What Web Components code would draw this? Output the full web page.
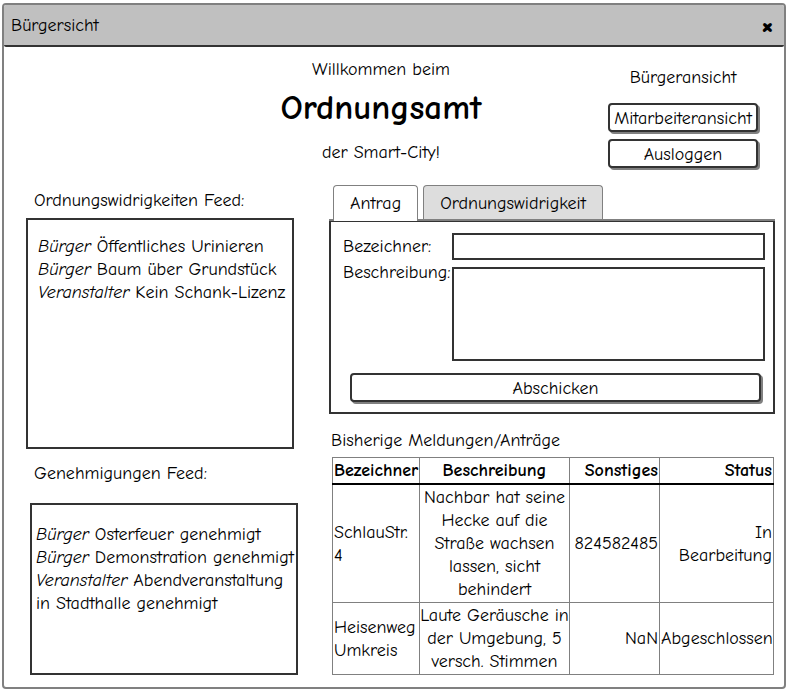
<!DOCTYPE html>
<html lang="de">
<head>
<meta charset="utf-8">
<title>Bürgersicht</title>
<style>
  body {
    margin: 3px 3px 3px 2px;
    color: #000;
    background: #fff;
    font: 18px/23px "Comic Neue", "Comic Sans MS", "Open Sans", sans-serif;
  }
</style>
</head>
<body>
<app-window heading="Bürgersicht">
  <welcome-header slot="header"></welcome-header>
  <feed-box slot="left" heading="Ordnungswidrigkeiten Feed:" class="reports">
    <div><i>Bürger</i> Öffentliches Urinieren</div>
    <div><i>Bürger</i> Baum über Grundstück</div>
    <div><i>Veranstalter</i> Kein Schank-Lizenz</div>
  </feed-box>
  <feed-box slot="left" heading="Genehmigungen Feed:" class="permits">
    <div><i>Bürger</i> Osterfeuer genehmigt</div>
    <div><i>Bürger</i> Demonstration genehmigt</div>
    <div><i>Veranstalter</i> Abendveranstaltung in Stadthalle genehmigt</div>
  </feed-box>
  <report-form slot="right"></report-form>
  <report-table slot="right"></report-table>
</app-window>

<script>
const define = (name, html, setup) => {
  const template = document.createElement('template');
  template.innerHTML = html;
  customElements.define(name, class extends HTMLElement {
    constructor() {
      super();
      this.attachShadow({ mode: 'open' }).append(template.content.cloneNode(true));
    }
    connectedCallback() {
      if (setup) setup(this, this.shadowRoot);
    }
  });
};

define('app-window', `
  <style>
    :host { display: block; border: 2px solid #808080; border-radius: 4px; }
    .bar {
      display: flex; align-items: center; justify-content: space-between;
      height: 40px; padding: 0 10px 0 7px;
      background: #c0c0c0; border-bottom: 2px solid #333; border-radius: 2px;
    }
    .bar button { padding: 0; border: 0; background: none; color: inherit; font: inherit; font-size: 34px; font-weight: bold; line-height: 23px; }
    .columns {
      display: grid; grid-template-columns: 272fr 446fr; gap: 31px;
      padding: 17px 9px 12px 22px; align-items: start;
    }
    .left, .right { display: flex; flex-direction: column; min-width: 0; }
    .left { padding-top: 4px; gap: 13px; }
    .right { gap: 15px; }
  </style>
  <div class="bar">
    <span class="title"></span>
    <button type="button" aria-label="Schließen">×</button>
  </div>
  <slot name="header"></slot>
  <div class="columns">
    <div class="left"><slot name="left"></slot></div>
    <div class="right"><slot name="right"></slot></div>
  </div>
`, (el, root) => {
  root.querySelector('.title').textContent = el.getAttribute('heading');
});

define('sketch-button', `
  <style>
    :host { display: block; }
    button {
      display: block; width: 100%; box-sizing: border-box; padding: 2px 0 0; font: inherit; color: inherit;
      background: #fff; border: 2px solid #333; border-radius: 4px;
      box-shadow: 2px 2px 0 #808080; white-space: nowrap;
    }
  </style>
  <button type="button"><slot></slot></button>
`);

define('welcome-header', `
  <style>
    :host {
      display: grid; grid-template-columns: 150px 1fr 150px;
      padding: 11px 26px 0 0; align-items: start;
    }
    .center { grid-column: 2; text-align: center; }
    p, h1 { margin: 0; }
    h1 { font-size: 35px; line-height: 40px; margin: 7px 0 13px; }
    .side { display: grid; gap: 7px; padding-top: 8px; text-align: center; }
    .side p { padding-bottom: 7px; }
  </style>
  <div class="center">
    <p>Willkommen beim</p>
    <h1>Ordnungsamt</h1>
    <p>der Smart-City!</p>
  </div>
  <div class="side">
    <p>Bürgeransicht</p>
    <sketch-button>Mitarbeiteransicht</sketch-button>
    <sketch-button>Ausloggen</sketch-button>
  </div>
`);

define('feed-box', `
  <style>
    :host { display: block; }
    h2 { margin: 0 0 6px 8px; font: inherit; }
    .box { box-sizing: border-box; min-height: 231px; margin-right: 4px; padding: 15px 0 15px 10px; border: 2px solid #333; }
    :host(.permits) .box { min-height: 172px; margin: 0 0 0 4px; padding: 18px 0 15px 4px; }
    :host(.permits) h2 { margin-bottom: 18px; }
  </style>
  <h2></h2>
  <div class="box"><slot></slot></div>
`, (el, root) => {
  root.querySelector('h2').textContent = el.getAttribute('heading');
});

define('report-form', `
  <style>
    :host { display: block; }
    .tabs { display: flex; align-items: end; gap: 5px; padding-left: 4px; border-bottom: 2px solid #808080; }
    .tabs button {
      font: inherit; color: inherit; padding: 6px 16px 4px; background: #ddd;
      border: 1px solid #808080; border-bottom: 0; border-radius: 4px 4px 0 0;
    }
    .tabs button[aria-selected="true"] { background: #fff; margin-bottom: -2px; padding-bottom: 6px; }
    form {
      display: grid; grid-template-columns: auto 1fr; column-gap: 2px; row-gap: 7px;
      padding: 11px 8px 9px 12px; border: 2px solid #333; border-top-width: 1px;
    }
    label { padding-top: 2px; }
    label[for="text"] { padding-top: 0; margin-top: -6px; }
    input, textarea {
      box-sizing: border-box; width: 100%; display: block; margin: 0; padding: 2px 4px; font: inherit;
      border: 2px solid #333; border-radius: 0; background: #fff; resize: none;
    }
    input { height: 27px; }
    textarea { height: 94px; }
    sketch-button { grid-column: 1 / 3; margin: 5px 4px 1px 7px; }
  </style>
  <div class="tabs" role="tablist">
    <button type="button" role="tab" aria-selected="true">Antrag</button>
    <button type="button" role="tab" aria-selected="false">Ordnungswidrigkeit</button>
  </div>
  <form>
    <label for="name">Bezeichner:</label><input id="name" type="text">
    <label for="text">Beschreibung:</label><textarea id="text"></textarea>
    <sketch-button>Abschicken</sketch-button>
  </form>
`);

define('report-table', `
  <style>
    :host { display: block; }
    h2 { margin: 0 0 5px 2px; font: inherit; }
    .frame { padding: 0 1px 0 3px; }
    table { width: 100%; table-layout: fixed; border-collapse: collapse; }
    th, td { padding: 1px; border: 1px solid #808080; text-align: right; }
    thead th { border-bottom: 2px solid #000; }
    tr > :nth-child(1) { text-align: left; }
    tr > :nth-child(2) { text-align: center; padding: 1px 0; }
    col:nth-child(1) { width: 87px; }
    col:nth-child(2) { width: 150px; }
    col:nth-child(3) { width: 90px; }
  </style>
  <h2 id="caption">Bisherige Meldungen/Anträge</h2>
  <div class="frame">
    <table aria-labelledby="caption">
      <colgroup><col><col><col><col></colgroup>
      <thead>
        <tr><th>Bezeichner</th><th>Beschreibung</th><th>Sonstiges</th><th>Status</th></tr>
      </thead>
      <tbody>
        <tr><td>SchlauStr. 4</td><td>Nachbar hat seine Hecke auf die Straße wachsen lassen, sicht behindert</td><td>824582485</td><td>In Bearbeitung</td></tr>
        <tr><td>Heisenweg Umkreis</td><td>Laute Geräusche in der Umgebung, 5 versch. Stimmen</td><td>NaN</td><td>Abgeschlossen</td></tr>
      </tbody>
    </table>
  </div>
`);
</script>
</body>
</html>
